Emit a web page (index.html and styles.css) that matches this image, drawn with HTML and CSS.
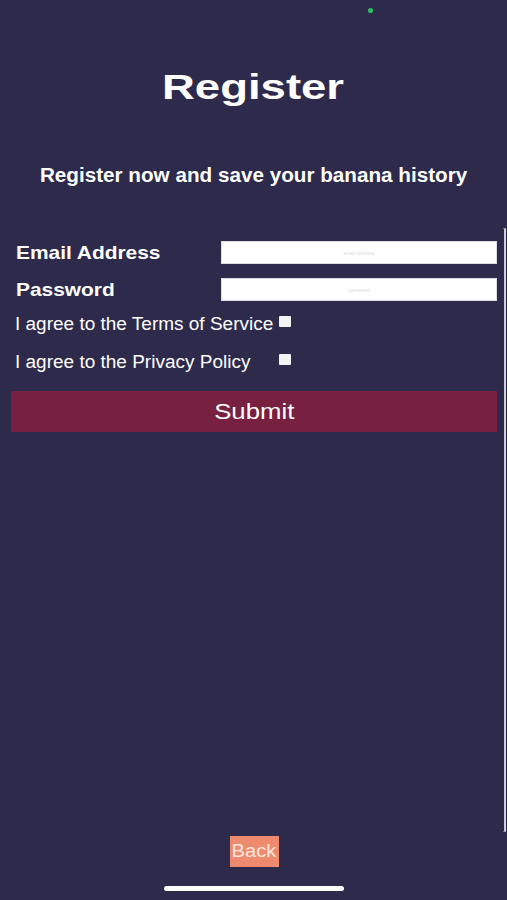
FILE: index.html
```html
<!DOCTYPE html>
<html lang="en">
<head>
<meta charset="utf-8">
<title>Register</title>
<link rel="stylesheet" href="styles.css">
</head>
<body>
<div class="screen">
  <div class="status"><span class="dot"></span></div>
  <h1 class="title"><span>Register</span></h1>
  <p class="subtitle"><span>Register now and save your banana history</span></p>
  <form class="form">
    <div class="field">
      <label class="label" for="email"><span>Email Address</span></label>
      <div class="input"><span>email address</span></div>
    </div>
    <div class="field field-second">
      <label class="label" for="password"><span>Password</span></label>
      <div class="input"><span>password</span></div>
    </div>
    <div class="agree agree-first">
      <span class="agree-text"><span>I agree to the Terms of Service</span></span>
      <span class="box"></span>
    </div>
    <div class="agree agree-second">
      <span class="agree-text"><span>I agree to the Privacy Policy</span></span>
      <span class="box"></span>
    </div>
    <div class="submit"><span>Submit</span></div>
  </form>
  <div class="footer">
    <div class="back"><span>Back</span></div>
    <div class="home"></div>
  </div>
  <div class="edge"></div>
</div>
</body>
</html>
```
FILE: styles.css
```css
* { box-sizing: border-box; }
html, body { margin: 0; padding: 0; }
body {
  background: #2d2a4b;
  font-family: "Liberation Sans", Arial, sans-serif;
  color: #ffffff;
}
.screen {
  position: relative;
  width: 507px;
  height: 900px;
  display: flex;
  flex-direction: column;
  overflow: hidden;
}
.status {
  height: 20px;
  padding: 8px 0 0 368px;
}
.dot {
  display: block;
  width: 5px;
  height: 5px;
  border-radius: 50%;
  background: #2fc25a;
}
.title {
  margin: 47px 0 0;
  height: 40px;
  font-size: 35px;
  line-height: 40px;
  font-weight: 700;
  text-align: center;
}
.title span {
  display: inline-block;
  transform: scaleX(1.3);
}
.subtitle {
  margin: 56px 0 0;
  height: 24px;
  font-size: 19.5px;
  line-height: 24px;
  font-weight: 700;
  text-align: center;
}
.subtitle span {
  display: inline-block;
  transform: scaleX(1.06);
}
.form {
  margin: 54px 10px 0 11px;
  display: flex;
  flex-direction: column;
}
.field {
  display: grid;
  grid-template-columns: 210px 1fr;
  align-items: start;
  height: 24px;
}
.field-second { margin-top: 13px; }
.label {
  padding-left: 5px;
  font-size: 18.5px;
  line-height: 24px;
  font-weight: 700;
  white-space: nowrap;
}
.label span {
  display: inline-block;
  transform: scaleX(1.13);
  transform-origin: left center;
}
.input {
  height: 23px;
  background: #ffffff;
  border: 1px solid #dcdce4;
  display: flex;
  align-items: center;
  justify-content: center;
  font-size: 5px;
  color: #dcdce2;
}
.agree {
  display: grid;
  grid-template-columns: 268px 12px;
  height: 22px;
}
.agree-first { margin-top: 11px; }
.agree-second { margin-top: 16px; }
.agree-text {
  padding-left: 4px;
  font-size: 18px;
  line-height: 22px;
  white-space: nowrap;
}
.agree-text span {
  display: inline-block;
  transform: scaleX(1.055);
  transform-origin: left center;
}
.box {
  margin-top: 3px;
  width: 12px;
  height: 11px;
  background: #f4f4f6;
  border-radius: 1px;
}
.submit {
  margin-top: 18px;
  height: 41px;
  background: #78203f;
  text-align: center;
  font-size: 22px;
  line-height: 41px;
}
.submit span {
  display: inline-block;
  transform: scaleX(1.17);
}
.footer {
  margin-top: auto;
  display: flex;
  flex-direction: column;
  align-items: center;
}
.back {
  width: 49px;
  height: 31px;
  margin-left: 1px;
  background: #ee8a6d;
  color: #fde6de;
  font-size: 18px;
  line-height: 31px;
  text-align: center;
}
.back span {
  display: inline-block;
  transform: scaleX(1.12);
}
.home {
  margin-top: 19px;
  margin-bottom: 9px;
  width: 180px;
  height: 5px;
  border-radius: 3px;
  background: #ffffff;
}
.edge {
  position: absolute;
  left: 503px;
  top: 228px;
  width: 3px;
  height: 604px;
  border-right: 2px solid #cfcfd8;
  border-top: 1px solid #6e6b86;
  border-bottom: 1px solid #6e6b86;
}
```
